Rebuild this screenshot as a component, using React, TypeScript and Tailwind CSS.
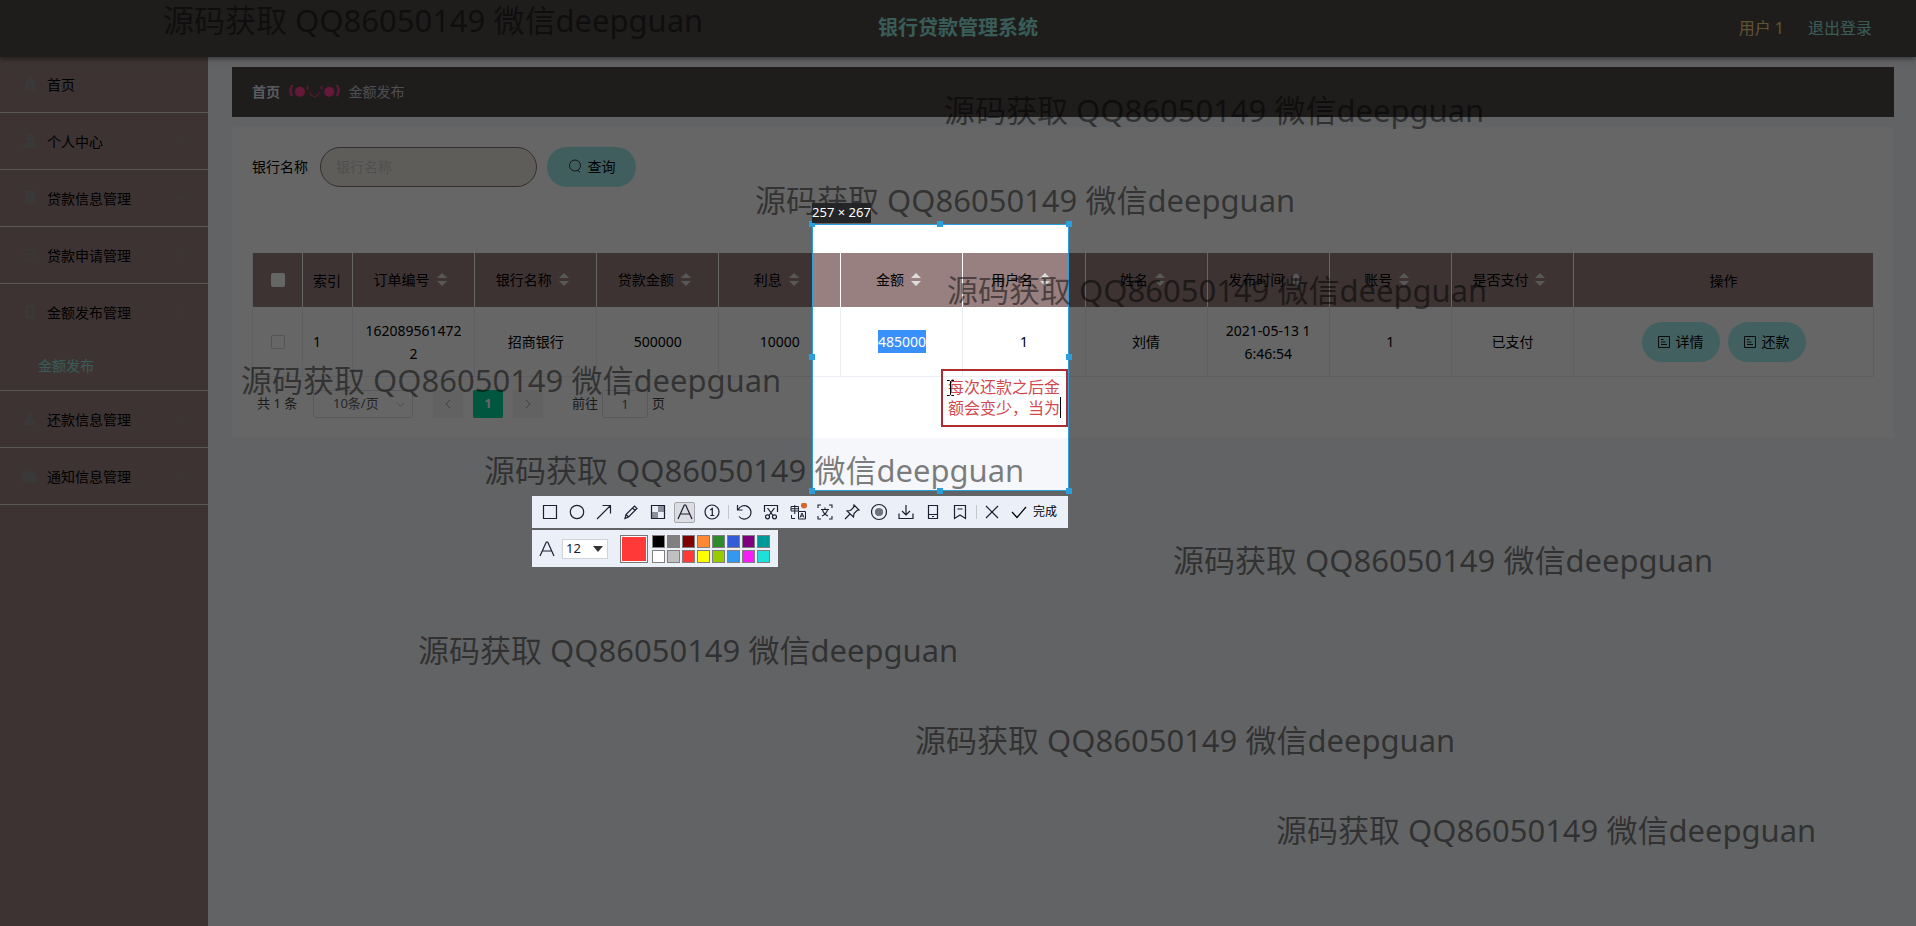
import React from "react";

type IconProps = { children: React.ReactNode; className?: string };

function Glyph({ children, className = "size-[18px]" }: IconProps) {
  return (
    <svg viewBox="0 0 18 18" className={className} fill="none" stroke="currentColor" strokeWidth="1.2" aria-hidden="true">
      {children}
    </svg>
  );
}

const menu = [
  { label: "首页", icon: <path d="M9 2 16 9h-2v6h-4v-4H8v4H4V9H2z" />, arrow: false },
  { label: "个人中心", icon: <path d="M9 2a3.5 3.5 0 1 1 0 7 3.5 3.5 0 0 1 0-7zM2 16c0-8 14-8 14 0z" />, arrow: true },
  { label: "贷款信息管理", icon: <path d="M4 2h10v11h-3l-2 3-2-3H4z" />, arrow: true },
  { label: "贷款申请管理", icon: <path d="M2 3h14v1H2zM2 8h14v1H2zM2 14h14v1H2z" />, arrow: true },
  { label: "金额发布管理", icon: <path d="M5 2h8v14H5zM7 4v9h4V4z" fillRule="evenodd" />, arrow: true, child: "金额发布" },
  { label: "还款信息管理", icon: <path d="M9 2 12 8l4 7H2l4-7z" />, arrow: true },
  { label: "通知信息管理", icon: <path d="M9 3l7 5v7H2V8z" />, arrow: true },
];

const columns = ["订单编号", "银行名称", "贷款金额", "利息", "金额", "用户名", "姓名", "发布时间", "账号", "是否支付"];

const watermarks = [
  "left-[163px] top-0",
  "left-[944px] top-[90px]",
  "left-[755px] top-[180px]",
  "left-[947px] top-[270px]",
  "left-[241px] top-[360px]",
  "left-[484px] top-[450px]",
  "left-[1173px] top-[540px]",
  "left-[418px] top-[630px]",
  "left-[915px] top-[720px]",
  "left-[1276px] top-[810px]",
];

const handles = [
  "-left-[3px] -top-[3px]",
  "left-[125px] -top-[3px]",
  "-right-[3px] -top-[3px]",
  "-left-[3px] top-[130px]",
  "-right-[3px] top-[130px]",
  "-left-[3px] -bottom-[3px]",
  "left-[125px] -bottom-[3px]",
  "-right-[3px] -bottom-[3px]",
];

const swatches = [
  "bg-black", "bg-[#808080]", "bg-[#800000]", "bg-[#ff8833]", "bg-[#2e8b2e]", "bg-[#335cd6]", "bg-[#800080]", "bg-[#009999]",
  "bg-white", "bg-[#c0c0c0]", "bg-[#ff3838]", "bg-[#ffff00]", "bg-[#99cc00]", "bg-[#3399ee]", "bg-[#f51ff5]", "bg-[#1fe0d8]",
];

const drawTools = [
  { name: "矩形", icon: <path d="M2.5 2.5h13v13h-13z" /> },
  { name: "椭圆", icon: <circle cx="9" cy="9" r="6.7" /> },
  { name: "箭头", icon: <path d="M2 16 15.5 2.5M7.5 2.5h8v8" /> },
  { name: "画笔", icon: <path d="M3 15.500 4 11.500 12.500 3 15 5.500 6.500 14zM10.500 5l2.500 2.500M4 11.500l2.500 2.500" /> },
  {
    name: "马赛克",
    icon: (
      <>
        <path d="M9 3h6.500v6H9zM3 9h6v6H3z" fill="#8a8f9c" stroke="none" />
        <path d="M2.500 2.500h13v13h-13z" />
      </>
    ),
  },
  { name: "文字", icon: <path d="M2 16 8.300 2h1.400L16 16M4.500 11h9" />, active: true },
  { name: "序号", icon: <><circle cx="9" cy="9" r="7" /><path d="M7.300 7 9.300 5.500V12.500M7.300 12.500h4" /></> },
];

const actionTools = [
  { name: "撤销", icon: <path d="M2.500 2v5h5M3 7a6.700 6.700 0 1 1 1 6.500" /> },
  {
    name: "截图",
    icon: (
      <>
        <path d="M2.500 9V2.500h13V9M5.500 5 11 12.500M12.500 5 7 12.500" />
        <circle cx="5.500" cy="13.800" r="2" />
        <circle cx="12.500" cy="13.800" r="2" />
      </>
    ),
  },
  {
    name: "翻译",
    icon: (
      <>
        <path d="M2 3.500h7.500v4.500H2zM5.750 2V11M2 5.750h7.500M2.500 12v3.500H6M9.500 8.500h7v7.500h-7z" strokeWidth="1" />
        <path d="M11 14.500 13 10 15 14.500M11.800 13h2.400" strokeWidth="1" />
        <circle cx="15" cy="2.500" r="3" fill="#d8652a" stroke="none" />
      </>
    ),
  },
  { name: "识别文字", icon: <path d="M2 5V2h3M13 2h3v3M16 13v3h-3M5 16H2v-3M5 6.500h8M9 4.500v2M6.500 7c1 3 3 5 5.500 6M11.500 7c-1 3-3 5-5.500 6" strokeWidth="1.1" /> },
  { name: "钉住", icon: <path d="M11 2l5 5-2 .5-3 3-.5 3.500L4 8l3.500-.500 3-3zM7 11l-5 5" /> },
  { name: "录制", icon: <><circle cx="9" cy="9" r="7.500" /><circle cx="9" cy="9" r="3.500" fill="#70747e" stroke="#70747e" /></> },
  { name: "保存", icon: <path d="M9 2v9.500M5 8l4 4 4-4M2 10.500v5h14v-5" /> },
  { name: "发送到手机", icon: <path d="M4.500 2.500h9v13h-9zM4.500 11.500h9M8 13.500h2" /> },
  { name: "收藏", icon: <path d="M3.500 2.500h11v13L9 12l-5.500 3.500zM6.500 6h5" /> },
];

function SortCarets() {
  return (
    <button type="button" aria-label="排序" className="flex w-6 flex-col items-center gap-[3px]">
      <svg viewBox="0 0 10 5" className="h-[5px] w-[10px] fill-[#dcdcdc]"><path d="M5 0l5 5H0z" /></svg>
      <svg viewBox="0 0 10 5" className="h-[5px] w-[10px] fill-[#dcdcdc]"><path d="M5 5 0 0h10z" /></svg>
    </button>
  );
}

function RowButton({ label }: { label: string }) {
  return (
    <button type="button" className="flex h-10 items-center gap-[6px] rounded-full bg-[#a8f0f0] px-4">
      <svg viewBox="0 0 12 12" className="size-[12px]" fill="none" stroke="#222" aria-hidden="true">
        <path d="M.5.5h11v11H.5zM3 3.500h2.500M3 6h4.500M3 8.500h6" />
      </svg>
      {label}
    </button>
  );
}

function Header() {
  return (
    <header className="relative z-10 -mb-px grid h-[57px] grid-cols-3 items-center bg-[#4e4648] px-11 pb-px shadow-[0_1px_6px_rgba(0,0,0,0.6)]">
      <h1 className="col-start-2 text-center text-[20px] font-bold text-[#8fe6dc]">银行贷款管理系统</h1>
      <div className="flex items-center justify-end gap-6 text-[16px]">
        <span className="text-[#f0cf7c]">用户 1</span>
        <a href="#logout" className="text-[#8fe6dc]">退出登录</a>
      </div>
    </header>
  );
}

function Sidebar() {
  return (
    <nav className="w-[208px] shrink-0 bg-[#988080]">
      <ul>
        {menu.map((item) => (
          <li key={item.label} className="border-b border-[#e8dcdc]">
            <a href="#menu" className="flex h-14 items-center pr-[22px] pl-[21px]">
              <svg viewBox="0 0 18 18" className="mr-2 size-[18px] fill-[#929090]" aria-hidden="true">{item.icon}</svg>
              <span className="flex-1">{item.label}</span>
              {item.arrow && (
                <svg viewBox="0 0 10 10" className="size-[10px] stroke-[#929090]" fill="none" aria-hidden="true"><path d="M1 3l4 4 4-4" /></svg>
              )}
            </a>
            {item.child && <a href="#amount" className="flex h-[50px] items-center pl-[38px] text-[#8fe6dc]">{item.child}</a>}
          </li>
        ))}
      </ul>
    </nav>
  );
}

function LoanTable() {
  const cell = "border-r border-b border-[#ebeef5] px-[10px] text-center break-all leading-[23px]";
  return (
    <table className="w-full table-fixed border-separate border-spacing-0 border-l border-[#ebeef5]">
      <colgroup>
        <col className="w-[50px]" />
        <col className="w-[50px]" />
        {columns.map((c) => <col key={c} />)}
        <col className="w-[300px]" />
      </colgroup>
      <thead>
        <tr className="h-[54px] bg-[#988080]">
          <th className="border-r border-white font-normal">
            <input type="checkbox" aria-label="全选" className="mx-auto block size-[14px] appearance-none rounded-[2px] bg-white" />
          </th>
          <th className="border-r border-white px-[10px] text-left font-normal">索引</th>
          {columns.map((c) => (
            <th key={c} className="border-r border-white pb-[2px] font-normal">
              <div className="flex items-center justify-center"><span>{c}</span><SortCarets /></div>
            </th>
          ))}
          <th className="border-r border-white font-normal">操作</th>
        </tr>
      </thead>
      <tbody>
        <tr className="h-[70px]">
          <td className={cell}>
            <input type="checkbox" aria-label="选择第 1 行" className="mx-auto block size-[14px] appearance-none rounded-[2px] border border-[#cfd2d8]" />
          </td>
          <td className="border-r border-b border-[#ebeef5] px-[10px]">1</td>
          <td className={cell}>1620895614722</td>
          <td className={cell}>招商银行</td>
          <td className={cell}>500000</td>
          <td className={cell}>10000</td>
          <td className={cell}><mark className="inline-block bg-[#3a90fa] text-white">485000</mark></td>
          <td className={cell}>1</td>
          <td className={cell}>刘倩</td>
          <td className={cell}>2021-05-13 1<br />6:46:54</td>
          <td className={cell}>1</td>
          <td className={cell}>已支付</td>
          <td className={cell}>
            <div className="flex justify-center gap-2">
              <RowButton label="详情" />
              <RowButton label="还款" />
            </div>
          </td>
        </tr>
      </tbody>
    </table>
  );
}

function Pagination() {
  return (
    <div className="mt-[13px] flex h-7 items-center text-[13px] text-[#444]">
      <span className="ml-[5px] w-14">共 1 条</span>
      <div className="relative mr-5 h-7 w-[100px]">
        <select aria-label="每页条数" className="h-7 w-full appearance-none rounded-[3px] border border-[#dcdfe6] bg-white pl-[19px] text-[13px] text-[#606266]">
          <option>10条/页</option>
        </select>
        <svg viewBox="0 0 10 10" className="pointer-events-none absolute top-[10px] right-2 size-[9px]" fill="none" stroke="#b4b8c0" aria-hidden="true"><path d="M1 3l4 4 4-4" /></svg>
      </div>
      <button type="button" aria-label="上一页" className="mr-[10px] flex h-7 w-[30px] items-center justify-center rounded-[2px] bg-[#f4f4f5]">
        <svg viewBox="0 0 10 10" className="size-[10px]" fill="none" stroke="#a0a4ac" aria-hidden="true"><path d="M7 1 3 5l4 4" /></svg>
      </button>
      <button type="button" className="mr-[10px] h-7 w-[30px] rounded-[2px] bg-[#00d89c] font-bold text-white">1</button>
      <button type="button" aria-label="下一页" className="mr-[29px] flex h-7 w-[30px] items-center justify-center rounded-[2px] bg-[#f4f4f5]">
        <svg viewBox="0 0 10 10" className="size-[10px]" fill="none" stroke="#a0a4ac" aria-hidden="true"><path d="M3 1l4 4-4 4" /></svg>
      </button>
      <label className="flex items-center gap-1">
        前往
        <input defaultValue="1" className="h-7 w-[46px] rounded-[3px] border border-[#dcdfe6] bg-white text-center text-[#606266]" />
        页
      </label>
    </div>
  );
}

function ToolButton({ name, icon, active }: { name: string; icon: React.ReactNode; active?: boolean }) {
  return (
    <button type="button" aria-label={name} className="flex h-8 w-[27px] items-center justify-center">
      <span className={active ? "flex size-[21px] items-center justify-center rounded-[2px] border border-[#a8a8ac] bg-[#dcdde2]" : "flex size-[21px] items-center justify-center"}>
        <Glyph className="size-[18px] shrink-0">{icon}</Glyph>
      </span>
    </button>
  );
}

function CaptureOverlay() {
  return (
    <div className="absolute top-[224px] left-[812px] h-[267px] w-[257px] shadow-[0_0_0_9999px_rgba(0,0,0,0.6)]">
      <div className="absolute inset-0 border border-[#2a9fdc]" />
      {handles.map((h) => <span key={h} className={`absolute size-[6px] bg-[#2a9fdc] ${h}`} />)}
    </div>
  );
}

function CaptureTools() {
  return (
    <>
      <div className="absolute top-[203px] left-[812px] h-5 w-[59px] bg-[#242526] text-center text-[13px] leading-[18px] whitespace-nowrap text-white">257 × 267</div>
      <div className="absolute top-[369px] left-[941px] w-[127px] border-2 border-[#ae2c30] py-[6px] pl-[5px] text-[16px] leading-[21px] text-[#d04a50]">
        每次还款之后金
        <br />
        额会变少，当为
        <span className="absolute top-[26px] left-[117px] h-[21px] w-px bg-black" />
        <svg viewBox="0 0 7 16" className="absolute top-[9px] left-1 h-4 w-[7px]" fill="none" stroke="#000" aria-hidden="true">
          <path d="M0 .5h2.500l1 1 1-1H7M3.500 1.500v13M0 15.500h2.500l1-1 1 1H7" />
        </svg>
      </div>
      <div className="absolute top-[496px] left-[532px] text-[#1c2030]">
        <div className="flex h-8 w-[536px] items-center bg-[#ebeff8] pl-1">
          {drawTools.map((t) => <ToolButton key={t.name} {...t} />)}
          <span className="mr-px ml-[3px] h-[14px] w-px bg-[#c4c7ce]" />
          {actionTools.map((t) => <ToolButton key={t.name} {...t} />)}
          <span className="mr-px ml-[3px] h-[14px] w-px bg-[#c4c7ce]" />
          <ToolButton name="取消" icon={<path d="M3 3l12 12M15 3 3 15" />} />
          <button type="button" className="flex items-center gap-[6px] pl-[6px] text-[12px] text-black">
            <svg viewBox="0 0 16 14" className="h-[14px] w-4" fill="none" stroke="currentColor" strokeWidth="1.2" aria-hidden="true"><path d="M1 7l5 5.500L15 2" /></svg>
            完成
          </button>
        </div>
        <div className="mt-[2px] flex h-[37px] w-[246px] items-center bg-[#ebeff8]">
          <Glyph className="ml-[6px] size-[18px]"><path d="M2 16 8.300 2h1.400L16 16M4.500 11h9" /></Glyph>
          <div className="relative ml-[6px] h-5">
            <select aria-label="字号" className="block h-5 w-[46px] appearance-none border border-[#d0d3da] bg-white pl-[3px] text-[13px] leading-none">
              <option>12</option>
            </select>
            <svg viewBox="0 0 10 6" className="pointer-events-none absolute top-[7px] right-[5px] h-[6px] w-[10px] fill-[#333]" aria-hidden="true"><path d="M0 0h10L5 6z" /></svg>
          </div>
          <span className="ml-3 size-7 border border-[#777] bg-[#ff3838] outline-1 -outline-offset-2 outline-white" />
          <div className="ml-1 grid grid-cols-8 gap-[2px]">
            {swatches.map((s) => <button type="button" key={s} aria-label="颜色" className={`size-[13px] border border-[#808080] ${s}`} />)}
          </div>
        </div>
      </div>
    </>
  );
}

export default function App() {
  return (
    <div className="relative overflow-hidden font-['Noto_Sans','Noto_Sans_CJK_SC',sans-serif] text-[14px] text-black">
      <div className="isolate flex min-h-screen flex-col bg-[#f5f7fa]">
        <Header />
        <div className="flex flex-1">
          <Sidebar />
          <main className="min-w-0 flex-1 pt-[11px] pr-[22px] pl-6">
            <div className="flex h-[50px] items-center bg-[#4e4648] px-5 pb-[2px]">
              <a href="#home" className="font-bold text-[#dfe4ee]">首页</a>
              <span className="mx-2 font-['DejaVu_Sans'] text-[13px] font-bold text-[#ff3d90]">(●'◡'●)</span>
              <span className="text-[#c0c4cc]">金额发布</span>
            </div>
            <section className="mt-[10px] rounded-[4px] bg-white p-5">
              <form className="flex items-center" onSubmit={(e) => e.preventDefault()}>
                <label htmlFor="bank" className="mr-3 pb-[2px]">银行名称</label>
                <input id="bank" placeholder="银行名称" className="h-10 w-[217px] rounded-full border border-[#887276] bg-[#ece8e0] px-[15px] pb-[2px] placeholder:text-[#c8c6cc]" />
                <button type="submit" className="ml-[10px] flex h-10 w-[89px] items-center justify-center gap-[6px] rounded-full bg-[#a0ecec] pb-[2px]">
                  <svg viewBox="0 0 14 14" className="size-[14px]" fill="none" stroke="#333" aria-hidden="true"><circle cx="7" cy="6.500" r="5.500" /><path d="M9.500 11.500 12 13" /></svg>
                  查询
                </button>
              </form>
              <div className="mt-[66px]"><LoanTable /></div>
              <Pagination />
            </section>
          </main>
        </div>
      </div>
      <CaptureOverlay />
      <div className="pointer-events-none absolute inset-0 text-[31px] leading-[40px] text-black/50">
        {watermarks.map((w) => <span key={w} className={`absolute whitespace-nowrap ${w}`}>源码获取 QQ86050149 微信deepguan</span>)}
      </div>
      <CaptureTools />
    </div>
  );
}
